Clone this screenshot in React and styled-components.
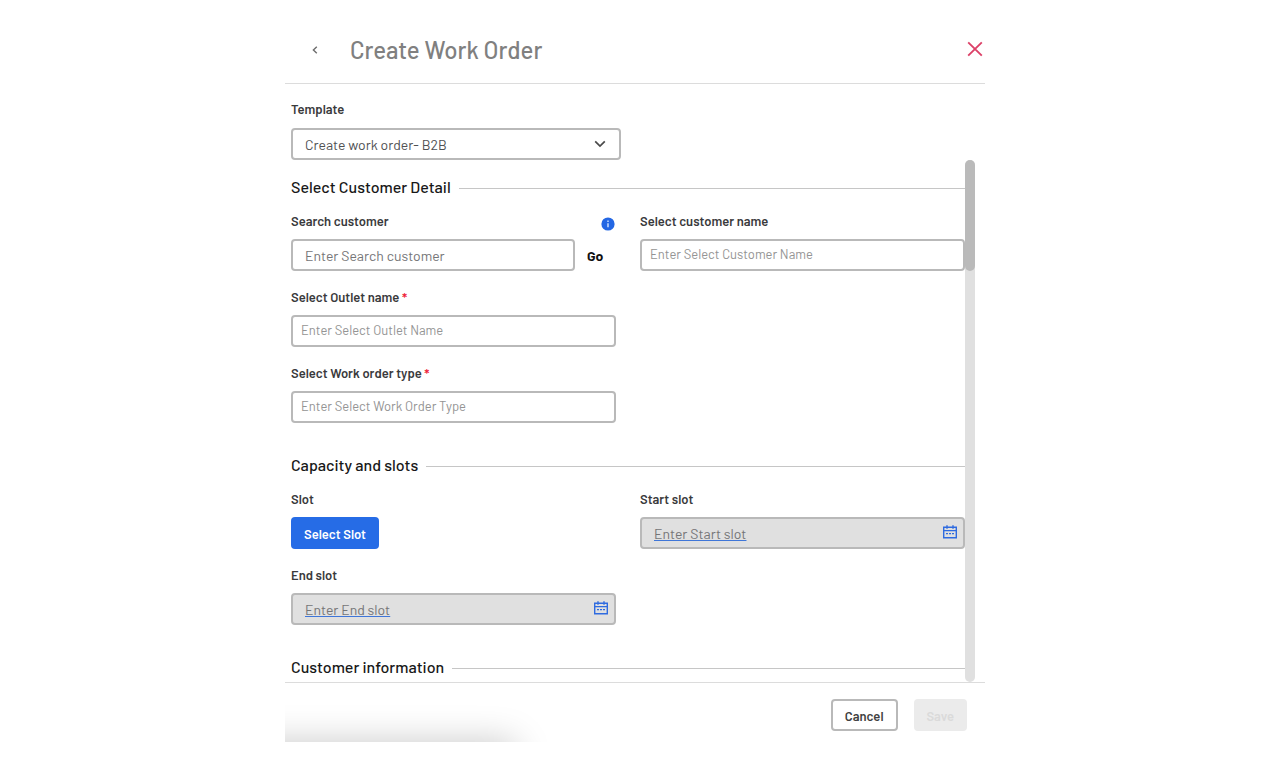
import styled, { createGlobalStyle } from "styled-components";

const customerFields = [
  { id: "outlet", label: "Select Outlet name", placeholder: "Enter Select Outlet Name" },
  { id: "type", label: "Select Work order type", placeholder: "Enter Select Work Order Type" },
];

export default function App() {
  return (
    <>
      <GlobalStyle />
      <Panel>
        <Header>
          <BackButton aria-label="Back">
            <svg width="6" height="8" viewBox="0 0 6 8" fill="none">
              <path d="M4.8 0.8L1.4 4l3.4 3.2" stroke="#6d6d6d" strokeWidth="1.4" />
            </svg>
          </BackButton>
          <Title>Create Work Order</Title>
          <CloseButton aria-label="Close">
            <svg width="16" height="16" viewBox="0 0 16 16" fill="none">
              <path d="M1.2 1.4l13.6 13.2M14.8 1.4L1.2 14.6" stroke="#dc4168" strokeWidth="1.9" />
            </svg>
          </CloseButton>
        </Header>

        <TemplateArea>
          <Label htmlFor="template">Template</Label>
          <SelectBox>
            <Select id="template">
              <option>Create work order- B2B</option>
            </Select>
            <Chevron width="12" height="8" viewBox="0 0 12 8" fill="none">
              <path d="M1.2 1.3L6 6.1l4.8-4.8" stroke="#4a4a4a" strokeWidth="1.7" />
            </Chevron>
          </SelectBox>
        </TemplateArea>

        <Body>
          <Sections>
            <section>
              <SectionTitle>Select Customer Detail</SectionTitle>
              <Fields>
                <Field>
                  <LabelRow>
                    <Label htmlFor="search">Search customer</Label>
                    <InfoIcon />
                  </LabelRow>
                  <SearchRow>
                    <Input id="search" $large placeholder="Enter Search customer" />
                    <GoButton>Go</GoButton>
                  </SearchRow>
                </Field>
                <Field>
                  <Label htmlFor="name">Select customer name</Label>
                  <Input id="name" placeholder="Enter Select Customer Name" />
                </Field>
                {customerFields.map((field) => (
                  <Field key={field.id} $newRow>
                    <Label htmlFor={field.id}>
                      {field.label} <Required>*</Required>
                    </Label>
                    <Input id={field.id} placeholder={field.placeholder} />
                  </Field>
                ))}
              </Fields>
            </section>

            <section>
              <SectionTitle>Capacity and slots</SectionTitle>
              <Fields>
                <Field>
                  <Label htmlFor="slot">Slot</Label>
                  <SlotButton id="slot">Select Slot</SlotButton>
                </Field>
                <DateField id="start" label="Start slot" placeholder="Enter Start slot" />
                <DateField id="end" label="End slot" placeholder="Enter End slot" />
              </Fields>
            </section>

            <section>
              <SectionTitle>Customer information</SectionTitle>
            </section>
          </Sections>
          <Track>
            <Thumb />
          </Track>
        </Body>

        <Footer>
          <CancelButton>Cancel</CancelButton>
          <SaveButton disabled>Save</SaveButton>
        </Footer>
      </Panel>
    </>
  );
}

function DateField({ id, label, placeholder }) {
  return (
    <Field>
      <Label htmlFor={id}>{label}</Label>
      <DateBox>
        <DateInput id={id} $large placeholder={placeholder} disabled />
        <CalendarIcon width="14" height="14" viewBox="0 0 14 14" fill="none">
          <path
            d="M0.7 2.2h12.6v10.6H0.7zM0.7 5.6h12.6M4 0.2v3.6M10 0.2v3.6"
            stroke="#2f6be0"
            strokeWidth="1.4"
          />
          <path d="M3 8.6h8" stroke="#2f6be0" strokeWidth="1.2" strokeDasharray="2 1" />
        </CalendarIcon>
      </DateBox>
    </Field>
  );
}

function InfoIcon() {
  return (
    <Info width="14" height="14" viewBox="0 0 14 14">
      <circle cx="7" cy="7" r="6.6" fill="#2467e4" />
      <path d="M7 6.2v4M7 3.6v1.4" stroke="#d5e4ff" strokeWidth="1.4" />
    </Info>
  );
}

const GlobalStyle = createGlobalStyle`
  * {
    box-sizing: border-box;
  }

  body {
    margin: 0;
    background-color: #ffffff;
  }

  body, button, input, select {
    font-family: Barlow, Roboto, "Liberation Sans", sans-serif;
  }
`;

const Panel = styled.main`
  display: flex;
  flex-direction: column;
  max-width: 700px;
  height: calc(100vh - 18px);
  margin: 0 auto;
`;

const Header = styled.header`
  display: flex;
  align-items: center;
  padding: 32px 0 16px 20px;
  border-bottom: 1px solid #dcdcdc;
`;

const IconButton = styled.button`
  display: flex;
  align-items: center;
  justify-content: center;
  padding: 0;
  border: none;
  background: none;
`;

const BackButton = styled(IconButton)`
  width: 20px;
  height: 20px;
`;

const CloseButton = styled(IconButton)`
  width: 20px;
  height: 20px;
  margin: 0 0 2px auto;
`;

const Title = styled.h1`
  margin: 0 0 0 25px;
  color: #808080;
  font-size: 24px;
  font-weight: 500;
  line-height: 35px;
`;

const TemplateArea = styled.div`
  display: flex;
  flex-direction: column;
  gap: 9px;
  padding: 15px 6px 0;
`;

const Label = styled.label`
  color: #3a3a3c;
  font-size: 13px;
  font-weight: 600;
  line-height: 20px;
`;

const SelectBox = styled.div`
  position: relative;
  max-width: 330px;
`;

const Select = styled.select`
  appearance: none;
  width: 100%;
  height: 32px;
  padding: 0 32px 0 12px;
  border: 2px solid #b9b9b9;
  border-radius: 4px;
  background-color: #ffffff;
  color: #505153;
  font-size: 14px;
`;

const Chevron = styled.svg`
  position: absolute;
  top: 12px;
  right: 15px;
  pointer-events: none;
`;

const Body = styled.div`
  display: flex;
  flex: 1;
  min-height: 0;
  padding: 0 10px 0 6px;
`;

const Sections = styled.div`
  display: flex;
  flex: 1;
  flex-direction: column;
  gap: 30px;
  padding-top: 15px;
  overflow: hidden;
`;

const SectionTitle = styled.h2`
  display: flex;
  align-items: center;
  gap: 8px;
  margin: 0;
  color: #181818;
  font-size: 16px;
  font-weight: 500;
  line-height: 24px;

  &::after {
    content: "";
    flex: 1;
    height: 1px;
    margin-top: 2px;
    background-color: #c6c6c6;
  }
`;

const Fields = styled.div`
  display: grid;
  grid-template-columns: 1fr 1fr;
  gap: 16px 24px;
  margin-top: 12px;
`;

const Field = styled.div`
  display: flex;
  flex-direction: column;
  gap: 8px;
  grid-column: ${({ $newRow }) => ($newRow ? "1" : "auto")};
`;

const LabelRow = styled.div`
  display: flex;
  align-items: flex-end;
  justify-content: space-between;
  height: 20px;
`;

const Info = styled.svg`
  margin-right: 1px;
`;

const Required = styled.span`
  color: #ee2238;
`;

const Input = styled.input`
  width: 100%;
  height: 32px;
  padding: ${({ $large }) => ($large ? "0 12px" : "0 8px 2px")};
  border: 2px solid #b9b9b9;
  border-radius: 4px;
  background-color: #ffffff;
  font-size: ${({ $large }) => ($large ? "14px" : "13px")};

  &::placeholder {
    color: ${({ $large }) => ($large ? "#757577" : "#949494")};
    opacity: 1;
  }
`;

const SearchRow = styled.div`
  display: flex;
  align-items: center;
  gap: 12px;
`;

const GoButton = styled.button`
  flex: 0 0 29px;
  padding: 0;
  border: none;
  background: none;
  color: #111111;
  font-size: 14px;
  font-weight: 700;
  text-align: left;
`;

const DateBox = styled.div`
  position: relative;
`;

const DateInput = styled(Input)`
  display: block;
  background-color: #e0e0e0;
  text-decoration: underline #3f76d8;
`;

const CalendarIcon = styled.svg`
  position: absolute;
  top: 8px;
  right: 8px;
`;

const Button = styled.button`
  height: 32px;
  padding: 2px 13px 0;
  border: none;
  border-radius: 4px;
  font-size: 13px;
  font-weight: 600;
`;

const SlotButton = styled(Button)`
  align-self: flex-start;
  background-color: #266ce6;
  color: #ffffff;
`;

const Track = styled.div`
  width: 10px;
  border-radius: 5px;
  background-color: #e0e0e0;
`;

const Thumb = styled.div`
  height: 111px;
  border-radius: 5px;
  background-color: #bababa;
`;

const Footer = styled.footer`
  position: relative;
  display: flex;
  justify-content: flex-end;
  gap: 16px;
  padding: 16px 18px 11px;
  border-top: 1px solid #dcdcdc;
  overflow: hidden;

  &::after {
    content: "";
    position: absolute;
    top: 100%;
    left: -40px;
    width: 270px;
    height: 40px;
    box-shadow: 0 0 36px rgba(0, 0, 0, 0.22);
  }
`;

const CancelButton = styled(Button)`
  padding: 2px 12px 0;
  border: 2px solid #b9b9b9;
  background-color: #ffffff;
  color: #3f3f41;
`;

const SaveButton = styled(Button)`
  background-color: #ebebeb;
  color: #dadada;
`;
